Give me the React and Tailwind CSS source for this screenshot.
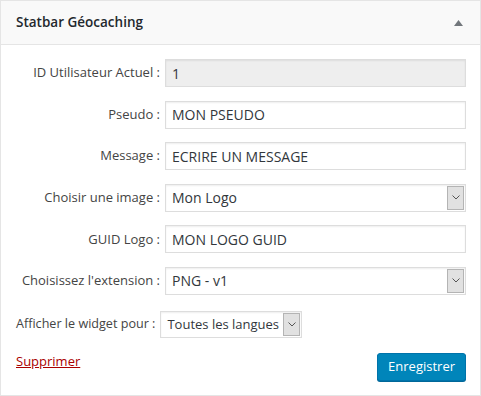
import React from "react";

const font = { fontFamily: '"Open Sans", "Noto Sans", sans-serif' };

function Chevron() {
  return (
    <svg width="8" height="5" viewBox="0 0 8 5" fill="none">
      <path d="M0.5 0.5 L4 4 L7.5 0.5" stroke="#555" strokeWidth="1" />
    </svg>
  );
}

function TextField({ value, disabled }) {
  return (
    <div
      className={`flex-1 h-[28px] flex items-center px-[6px] border text-[14px] text-[#32373c] whitespace-nowrap ${
        disabled ? "bg-[#eeeeee] border-[#dddddd]" : "bg-white border-[#dddddd]"
      } shadow-[inset_0_1px_2px_rgba(0,0,0,0.07)]`}
    >
      {value}
    </div>
  );
}

function SelectField({ value, className = "flex-1 text-[14px]", height = "h-[28px]" }) {
  return (
    <div
      className={`${className} ${height} flex items-center justify-between pl-[6px] pr-[1px] border border-[#dddddd] bg-white text-[#32373c] whitespace-nowrap shadow-[inset_0_1px_2px_rgba(0,0,0,0.07)]`}
    >
      <span>{value}</span>
      <span className="w-[17px] h-[calc(100%-2px)] flex items-center justify-center bg-[#e1e1e1] border border-[#b4b4b4]">
        <Chevron />
      </span>
    </div>
  );
}

function Row({ label, children }) {
  return (
    <div className="flex items-center">
      <label className="w-[164px] shrink-0 text-right pr-[5px] text-[13px] text-[#444] whitespace-nowrap">
        {label}
      </label>
      {children}
    </div>
  );
}

export default function App() {
  return (
    <div className="w-[481px] h-[396px] bg-white" style={font}>
      <div className="w-[481px] h-[396px] border border-[#e5e5e5] flex flex-col">
        {/* Header */}
        <div className="h-[44px] shrink-0 bg-[#f9f9f9] border-b border-[#e5e5e5] flex items-center justify-between pl-[15px] pr-[17px]">
          <span className="text-[13.5px] font-semibold text-[#23282d]">Statbar Géocaching</span>
          <svg width="9" height="6" viewBox="0 0 9 6">
            <path d="M0 6 L4.5 0 L9 6 Z" fill="#72777c" />
          </svg>
        </div>

        {/* Form */}
        <div className="flex flex-col pr-[14px] pt-[14px] gap-[13.6px]">
          <Row label="ID Utilisateur Actuel :">
            <TextField value="1" disabled />
          </Row>
          <Row label="Pseudo :">
            <TextField value="MON PSEUDO" />
          </Row>
          <Row label="Message :">
            <TextField value="ECRIRE UN MESSAGE" />
          </Row>
          <Row label="Choisir une image :">
            <SelectField value="Mon Logo" />
          </Row>
          <Row label="GUID Logo :">
            <TextField value="MON LOGO GUID" />
          </Row>
          <Row label="Choisissez l'extension :">
            <SelectField value="PNG - v1" />
          </Row>
        </div>

        <div className="flex items-center pl-[15px] mt-[16px]">
          <span className="text-[12.6px] text-[#444] pr-[5px] whitespace-nowrap">Afficher le widget pour :</span>
          <SelectField value="Toutes les langues" className="w-[142px] shrink-0 text-[13px]" height="h-[27px]" />
        </div>

        <div className="flex items-center justify-between pl-[15px] pr-[14px] mt-[15px]">
          <a href="#" className="text-[13px] text-[#a00] underline -mt-[10px]">
            Supprimer
          </a>
          <button className="h-[28px] px-[10px] rounded-[3px] bg-[#0085ba] border border-[#0073aa] shadow-[0_1px_0_#006799] text-white text-[13px]">
            Enregistrer
          </button>
        </div>
      </div>
    </div>
  );
}
